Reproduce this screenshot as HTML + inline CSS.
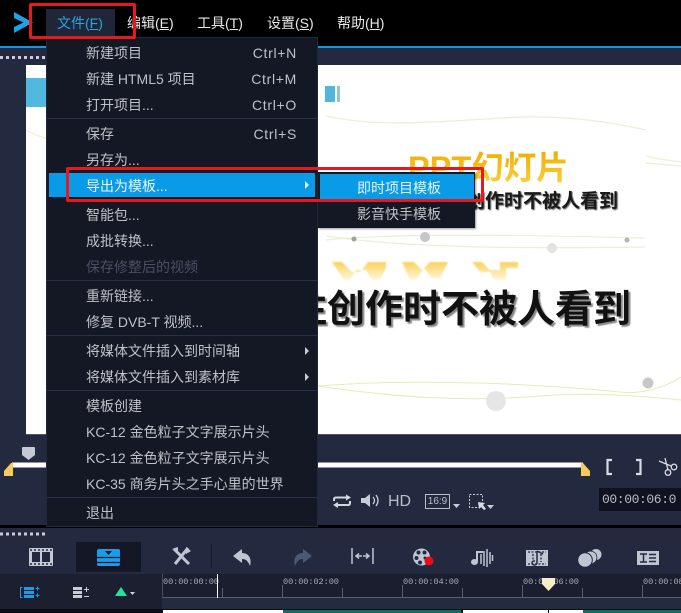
<!DOCTYPE html>
<html><head><meta charset="utf-8">
<style>
html,body{margin:0;padding:0;background:#232a40}
#r{position:relative;width:681px;height:613px;overflow:hidden;background:#232a40;font-family:"Liberation Sans","Noto Sans CJK SC",sans-serif}
#r div,#r svg{position:absolute}
.t{white-space:nowrap;line-height:20px;height:20px;font-size:14px;color:#bfc1c8}
.m{left:86px}
.k{right:384px;text-align:right;letter-spacing:.7px}
.top{top:13px;color:#e8e8ea;font-size:14px}
.top u{text-underline-offset:1px}
.sep{left:47px;width:270px;height:1px;background:#2a2f45}
.ar{width:0;height:0;border-left:4px solid #c9cdd6;border-top:4px solid transparent;border-bottom:4px solid transparent;left:305px}
.tc{top:577px;height:11px;font:8.6px/11px "Liberation Mono",monospace;color:#a9adb8;letter-spacing:-.08px;white-space:nowrap}
.tk{width:1px;background:#5a5f70}
</style></head><body>
<div id="r">
<!-- top bar -->
<div style="left:0;top:0;width:681px;height:46px;background:#000"></div>
<div style="left:0;top:46px;width:681px;height:2px;background:#1596dd"></div>
<svg style="left:12px;top:11px" width="24" height="24" viewBox="12 11 24 24"><path d="M14 12L33 22.500L14 33V27L23.500 22.500L14 18Z" fill="#1ea2e6"/></svg>
<div style="left:46px;top:9px;width:69px;height:27px;background:#1f2638"></div>
<div class="t top" style="left:57px;color:#2aa3e2">文件(<u>F</u>)</div>
<div class="t top" style="left:127px">编辑(<u>E</u>)</div>
<div class="t top" style="left:197px">工具(<u>T</u>)</div>
<div class="t top" style="left:267px">设置(<u>S</u>)</div>
<div class="t top" style="left:337px">帮助(<u>H</u>)</div>

<!-- dotted strip -->
<svg style="left:0;top:55px" width="46" height="5"><path d="M0 2.500H46" stroke="#c8ccd6" stroke-width="3" stroke-dasharray="3 3"/></svg>

<!-- preview -->
<div style="left:26px;top:65px;width:655px;height:370px;background:#fff"></div>
<svg style="left:26px;top:65px" width="655" height="370" viewBox="26 65 655 370">
<defs>
<linearGradient id="g" x1="0" y1="0" x2="0" y2="1"><stop offset="0" stop-color="#f0ae00"/><stop offset="1" stop-color="#fbd040"/></linearGradient>
<linearGradient id="g2" gradientUnits="userSpaceOnUse" x1="0" y1="262" x2="0" y2="281"><stop offset="0" stop-color="#f9d25c"/><stop offset="1" stop-color="#fff8e4"/></linearGradient>
<filter id="b"><feGaussianBlur stdDeviation=".5"/></filter>
<filter id="b2"><feGaussianBlur stdDeviation=".9"/></filter>
</defs>
<rect x="26" y="78" width="21" height="29" fill="#52b9de"/>
<rect x="325" y="86" width="10" height="16" fill="#4fb6dc"/><rect x="337" y="86" width="3" height="16" fill="#8cc9cf"/>
<g fill="none" stroke="#eceed6" stroke-width="1.200">
<path d="M326 116 C380 128 430 122 520 117 C570 116 610 122 646 130"/>
<path d="M646 156 C660 160 670 160 681 162 M646 163 L681 166"/>
<path d="M326 240 C400 232 560 236 645 238 M326 236 C420 250 560 248 645 247 M26 130C35 135 40 137 46 138"/>
</g>
<g fill="none" stroke="#e6ebb8" stroke-width="1">
<path d="M318 386 C420 378 540 384 620 392 C640 394 660 390 681 377"/>
<path d="M318 386 C400 398 470 402 540 396 C590 392 640 396 681 400"/>
</g>
<circle cx="354" cy="239" r="2.500" fill="#a0a0a0"/><circle cx="425" cy="237" r="5" fill="#c6c6c6"/><circle cx="552" cy="248" r="5" fill="#e2e2e2"/><circle cx="627" cy="240" r="2.500" fill="#b4b4b4"/>
<circle cx="496" cy="401" r="10" fill="#e6e6e6"/><circle cx="648" cy="383" r="5.500" fill="#c8c8c8"/>
<text x="408" y="179" font-family="Liberation Sans,Noto Sans CJK SC,sans-serif" font-size="32.500" font-weight="700" fill="url(#g)">PPT幻灯片</text>
<text x="466" y="207" font-family="Liberation Sans,Noto Sans CJK SC,sans-serif" font-size="19" font-weight="700" fill="#555" transform="translate(1 1)" filter="url(#b)">创作时不被人看到</text>
<text x="466" y="207" font-family="Liberation Sans,Noto Sans CJK SC,sans-serif" font-size="19" font-weight="700" fill="#1a1a1a">创作时不被人看到</text>
<path d="M332 262H342L352 272H360L368 262H386V268L380 280H372L366 270H356L350 280H344ZM402 262H414L422 270L430 262H448L440 278H432L424 268L416 280H410ZM472 262H482L490 270H500V262H518V268H506V280H494L490 272H480Z" fill="url(#g2)" filter="url(#b2)"/>
<text x="289" y="322" font-family="Liberation Sans,Noto Sans CJK SC,sans-serif" font-size="38" font-weight="700" fill="#888" transform="translate(2 2)" filter="url(#b)">注创作时不被人看到</text>
<text x="289" y="322" font-family="Liberation Sans,Noto Sans CJK SC,sans-serif" font-size="38" font-weight="700" fill="#111">注创作时不被人看到</text>
</svg>
<div style="left:26px;top:434px;width:655px;height:1px;background:#555"></div>

<!-- below preview -->
<svg style="left:0;top:440px" width="681" height="85" viewBox="0 440 681 85">
<path d="M23 447H34Q35 447 35 448V455L28.500 460L22 455V448Q22 447 23 447Z" fill="#c4c8d2"/>
<rect x="12" y="462.500" width="571" height="5" fill="#fff"/>
<path d="M4 476V471L11 463H13V476Z" fill="#fbc95c"/>
<path d="M581 463H583L590 471V476H581Z" fill="#fbc95c"/>
<path d="M612 460H607.500V474H612" stroke="#d8dbe4" stroke-width="2.200" fill="none"/>
<path d="M636 460H640.500V474H636" stroke="#d8dbe4" stroke-width="2.200" fill="none"/>
<g stroke="#d8dbe4" stroke-width="1.300" fill="none"><path d="M665 458L668 470M659 461L671 466"/><circle cx="668" cy="472.500" r="2.800"/><circle cx="674" cy="467" r="2.800"/></g>
<g stroke="#d3d7e0" stroke-width="2" fill="none"><path d="M334 501V499.500Q334 497.500 336 497.500H347"/><path d="M350 501V503Q350 505 348 505H337"/></g>
<path d="M346 494.500L351 497.500L346 500.500ZM338 502L333 505L338 508Z" fill="#d3d7e0"/>
<path d="M361 498H365L370 494V507L365 503H361Z" fill="#c8ccd6"/>
<path d="M373 497Q376 500.500 373 504M376 495Q380 500.500 376 506" stroke="#c8ccd6" stroke-width="1.300" fill="none"/>
<rect x="425.500" y="494.500" width="24" height="14" fill="none" stroke="#b9bec9"/>
<path d="M453 504H460L456.500 508Z" fill="#c8ccd6"/>
<rect x="469.500" y="494.500" width="13" height="13" fill="none" stroke="#c8ccd6" stroke-dasharray="2 1.500"/>
<path d="M478 502L485 503L483 505L486 509L484 510L481 507L479 509Z" fill="#d8dbe4"/>
<path d="M487 505H494L490.500 509Z" fill="#c8ccd6"/>
</svg>
<div class="t" style="left:388px;top:492px;font-size:16px;color:#b9bec9">HD</div>
<div style="left:425px;top:495px;width:25px;height:14px;line-height:14px;text-align:center;font-size:10px;color:#b9bec9">16:9</div>
<div style="left:599px;top:488px;width:82px;height:23px;background:#10131f"></div>
<div style="left:602px;top:489px;height:22px;font:13px/22px 'Liberation Mono',monospace;color:#b8bcc8;letter-spacing:-.4px;white-space:nowrap">00:00:06:0</div>

<!-- black band -->
<div style="left:0;top:525px;width:681px;height:3px;background:#000"></div>
<svg style="left:0;top:532px" width="46" height="4"><path d="M0 2H46" stroke="#c8ccd6" stroke-width="3" stroke-dasharray="3 3"/></svg>
<div style="left:76px;top:542px;width:65px;height:30px;background:#141826"></div>

<!-- toolbar icons -->
<svg style="left:0;top:535px" width="681" height="40" viewBox="0 535 681 40">
<rect x="29" y="548" width="24" height="18" rx="1" fill="#c6cad6"/>
<rect x="32" y="552" width="8" height="10" fill="#232a40"/><rect x="42" y="552" width="8" height="10" fill="#232a40"/>
<path d="M30 550H52M30 564H52" stroke="#232a40" stroke-width="1.500" stroke-dasharray="2 2"/>
<rect x="97" y="549" width="23" height="17" rx="2" fill="#1b9ce8"/>
<path d="M97 557.500H120M97 562.500H120" stroke="#141826" stroke-width="1.300"/>
<path d="M108.500 555L105 551H112Z" fill="#141826"/>
<g stroke="#c0c5d2" stroke-width="3" fill="none"><path d="M174 549L189 564"/><path d="M188 548L175 564"/></g>
<path d="M172 549L178 547L178 552ZM186 547L191 551L186 554Z" fill="#c0c5d2"/>
<rect x="211" y="544" width="1" height="24" fill="#151a29"/>
<path d="M233 556L242 549V553C249 553 252 559 250 566C248 561 246 559 242 559V563Z" fill="#c0c5d2"/>
<path d="M312 556L303 549V553C296 553 293 559 295 566C297 561 299 559 303 559V563Z" fill="#4c5876"/>
<g stroke="#c0c5d2" stroke-width="1.500" fill="none"><path d="M352 548V564M373 548V564M356 556H362M359 553.500L356 556L359 558.500M363 556H369M366 553.500L369 556L366 558.500"/></g>
<circle cx="421.500" cy="557" r="8.500" fill="#c0c5d2"/>
<g fill="#232a40"><circle cx="418.500" cy="552.500" r="2"/><circle cx="424.500" cy="552.500" r="2"/><circle cx="416.500" cy="558" r="2"/><circle cx="420" cy="562.500" r="2"/><circle cx="425" cy="558" r="1.500"/></g>
<circle cx="429" cy="561" r="4.500" fill="#ee0b16"/>
<ellipse cx="474.500" cy="562" rx="3.500" ry="3" fill="#c0c5d2"/>
<path d="M477 562V552H483" stroke="#c0c5d2" stroke-width="2" fill="none"/>
<path d="M481 554V564M484 551V566M487 549V567M490 552V564M492.500 555V561" stroke="#c0c5d2" stroke-width="1.500"/>
<rect x="526" y="550" width="22" height="16" fill="#c0c5d2"/>
<path d="M528 552H546M528 564H546M533 554V562M541 554V562" stroke="#232a40" stroke-width="1.300" stroke-dasharray="2 1.500"/>
<path d="M537 551V563A2.500 2 0 1 1 535 561M537 551L543 554" stroke="#232a40" stroke-width="1.500" fill="none"/>
<circle cx="596" cy="554.500" r="5.500" fill="#c0c5d2"/>
<circle cx="590.500" cy="557.500" r="6.800" fill="#232a40"/><circle cx="590.500" cy="557.500" r="6" fill="#c0c5d2"/>
<circle cx="585" cy="560" r="7.800" fill="#232a40"/><circle cx="585" cy="560" r="6.800" fill="#c0c5d2"/>
<rect x="637" y="551" width="22" height="14" fill="#c0c5d2"/>
<path d="M640 554H647M643.500 554V562M640 562H647M649 554.500H656M649 558H656M649 561.500H656" stroke="#232a40" stroke-width="1.500" fill="none"/>
</svg>

<!-- lower dark -->
<div style="left:0;top:574px;width:162px;height:35px;background:#1b1f30"></div>
<div style="left:162px;top:574px;width:519px;height:24px;background:#1a1e2e"></div>
<div style="left:162px;top:598px;width:519px;height:11px;background:#252b3f"></div>
<div style="left:162px;top:597px;width:519px;height:1px;background:#5a5f70"></div>
<div style="left:162px;top:574px;width:1px;height:24px;background:#4a4f60"></div>
<div class="tc" style="left:163px">00:00:00:00</div>
<div class="tc" style="left:283px">00:00:02:00</div>
<div class="tc" style="left:403px">00:00:04:00</div>
<div class="tc" style="left:523px">00:00:06:00</div>
<div class="tc" style="left:643px">00:00:08:00</div>
<div class="tk" style="left:222px;top:588px;height:9px"></div>
<div class="tk" style="left:282px;top:585px;height:12px"></div>
<div class="tk" style="left:342px;top:588px;height:9px"></div>
<div class="tk" style="left:402px;top:585px;height:12px"></div>
<div class="tk" style="left:462px;top:588px;height:9px"></div>
<div class="tk" style="left:522px;top:585px;height:12px"></div>
<div class="tk" style="left:582px;top:588px;height:9px"></div>
<div class="tk" style="left:642px;top:585px;height:12px"></div>
<div style="left:217px;top:574px;width:1px;height:24px;background:#fff"></div>
<svg style="left:541px;top:578px" width="15" height="14"><path d="M1 0H14V6L7.500 13L1 6Z" fill="#f6eecb"/></svg>
<svg style="left:0;top:580px" width="150" height="24" viewBox="0 580 150 24">
<rect x="24" y="587" width="10" height="3" fill="#1a9be6"/><rect x="24" y="591" width="10" height="3" fill="#1a9be6"/><rect x="24" y="595" width="10" height="3" fill="#1a9be6"/>
<path d="M22.500 587.500H20.500V597.500H22.500" stroke="#1a9be6" fill="none"/>
<path d="M35.500 588.500h4M37.500 586.500v4M35.500 595.500h4M37.500 593.500v4" stroke="#1a9be6"/>
<rect x="73" y="587" width="9" height="3" fill="#c8ccd6"/><rect x="73" y="591" width="9" height="3" fill="#c8ccd6"/><rect x="73" y="595" width="9" height="3" fill="#c8ccd6"/>
<path d="M84 589.500h5M86.500 587v5M84 596.500h5" stroke="#c8ccd6"/>
<path d="M115 596L121 587L127 596Z" fill="#21e39a"/>
<path d="M130 592H135L132.500 595Z" fill="#d0d4dc"/>
</svg>
<!-- clips -->
<div style="left:0;top:609px;width:681px;height:4px;background:#0c0e16"></div>
<div style="left:163px;top:610px;width:120px;height:3px;background:#fff"></div>
<div style="left:283px;top:610px;width:178px;height:3px;background:#0e6e5f"></div>
<div style="left:463px;top:610px;width:120px;height:3px;background:#fff"></div>
<div style="left:548px;top:610px;width:1px;height:3px;background:#000"></div>
<div style="left:583px;top:610px;width:98px;height:3px;background:#0e6e5f"></div>

<!-- menu -->
<div style="left:46px;top:37px;width:272px;height:490px;background:#141724;box-shadow:0 0 0 1px #23283a inset"></div>
<div class="t m" style="top:43px">新建项目</div><div class="t k" style="top:43px">Ctrl+N</div>
<div class="t m" style="top:69px">新建 HTML5 项目</div><div class="t k" style="top:69px">Ctrl+M</div>
<div class="t m" style="top:95px">打开项目...</div><div class="t k" style="top:95px">Ctrl+O</div>
<div class="sep" style="top:118px"></div>
<div class="t m" style="top:124px">保存</div><div class="t k" style="top:124px">Ctrl+S</div>
<div class="t m" style="top:150px">另存为...</div>
<div style="left:49px;top:173px;width:266px;height:24px;background:#0a9be8"></div>
<div class="t m" style="top:176px;color:#e8f3fb">导出为模板...</div>
<div class="ar" style="top:181px;border-left-color:#e8f3fb"></div>
<div class="t m" style="top:205px">智能包...</div>
<div class="t m" style="top:231px">成批转换...</div>
<div class="t m" style="top:257px;color:#4a4f62">保存修整后的视频</div>
<div class="sep" style="top:280px"></div>
<div class="t m" style="top:286px">重新链接...</div>
<div class="t m" style="top:312px">修复 DVB-T 视频...</div>
<div class="sep" style="top:335px"></div>
<div class="t m" style="top:341px">将媒体文件插入到时间轴</div><div class="ar" style="top:347px"></div>
<div class="t m" style="top:367px">将媒体文件插入到素材库</div><div class="ar" style="top:373px"></div>
<div class="sep" style="top:390px"></div>
<div class="t m" style="top:396px">模板创建</div>
<div class="t m" style="top:422px">KC-12 金色粒子文字展示片头</div>
<div class="t m" style="top:448px">KC-12 金色粒子文字展示片头</div>
<div class="t m" style="top:474px">KC-35 商务片头之手心里的世界</div>
<div class="sep" style="top:497px"></div>
<div class="t m" style="top:503px">退出</div>

<!-- submenu -->
<div style="left:318px;top:172px;width:157px;height:56px;background:#141724;box-shadow:1px 1px 2px rgba(0,0,0,.4)"></div>
<div style="left:320px;top:174px;width:154px;height:25px;background:#0a9be8"></div>
<div class="t" style="left:357px;top:178px;color:#e8f3fb">即时项目模板</div>
<div class="t" style="left:357px;top:204px">影音快手模板</div>

<!-- red annotation boxes -->
<div style="left:29px;top:3px;width:101px;height:30px;border:3px solid #e8191c;border-radius:2px"></div>
<div style="left:66px;top:167px;width:412px;height:29px;border:3px solid #e8191c;border-radius:2px"></div>
</div>
</body></html>
